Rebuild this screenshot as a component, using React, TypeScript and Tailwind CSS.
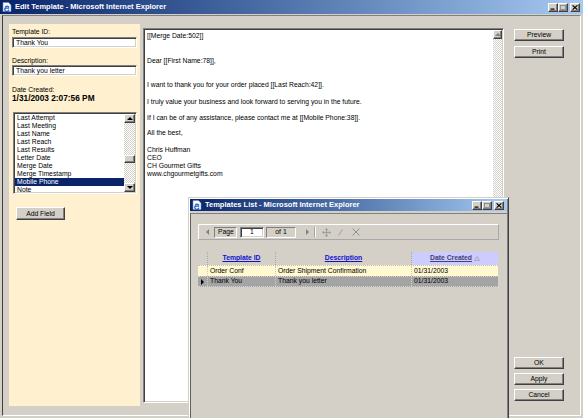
import React from "react";

const F = "font-['Liberation_Sans',Arial,sans-serif]";
const raised =
  "bg-[#d4d0c8] border border-t-white border-l-white border-r-[#404040] border-b-[#404040] shadow-[inset_-1px_-1px_0_#808080]";
const sunken =
  "border border-t-[#808080] border-l-[#808080] border-b-white border-r-white shadow-[inset_1px_1px_0_#404040,inset_-1px_-1px_0_#d4d0c8]";
const checker =
  "bg-[repeating-conic-gradient(#d4d0c8_0_25%,#ffffff_0_50%)] bg-[length:2px_2px]";

function TBtn({ kind }: { kind: "min" | "max" | "close" }) {
  return (
    <div className={`w-[10px] h-[9px] flex items-center justify-center ${raised}`}>
      <svg width="6" height="5" viewBox="0 0 6 5">
        {kind === "min" && <rect x="0.5" y="3.5" width="4" height="1.2" fill="#000" />}
        {kind === "max" && (
          <rect x="0.5" y="0.5" width="5" height="4" fill="none" stroke="#808080" strokeWidth="0.8" />
        )}
        {kind === "close" && (
          <path d="M0.6 0.4 L5.4 4.6 M5.4 0.4 L0.6 4.6" stroke="#000" strokeWidth="1.2" />
        )}
      </svg>
    </div>
  );
}

function IEIcon() {
  return (
    <svg width="10" height="10" viewBox="0 0 10 10">
      <path d="M1 0.5 H6.5 L9 3 V9.5 H1 Z" fill="#fff" stroke="#6b86b8" strokeWidth="0.6" />
      <path
        d="M7.2 6.2 H3.2 A2 2 0 1 0 6.8 7.6 M3.3 5.2 A2 2 0 0 1 6.9 5.3"
        fill="none"
        stroke="#1e5fd0"
        strokeWidth="1.3"
      />
    </svg>
  );
}

function TitleBar({ title, h }: { title: string; h: string }) {
  return (
    <div className={`${h} flex items-center bg-gradient-to-r from-[#0a246a] to-[#a6caf0] pl-[2px] pr-[3px]`}>
      <IEIcon />
      <span className="ml-[3px] text-white font-bold text-[7.5px] leading-none whitespace-nowrap">{title}</span>
      <div className="ml-auto flex items-center">
        <TBtn kind="min" />
        <TBtn kind="max" />
        <div className="ml-[2px]">
          <TBtn kind="close" />
        </div>
      </div>
    </div>
  );
}

function Btn({ label, className = "" }: { label: string; className?: string }) {
  return (
    <div className={`w-[50px] h-[12px] flex items-center justify-center text-[6.8px] leading-none ${raised} ${className}`}>
      {label}
    </div>
  );
}

function Arrow({ dir, color = "#000" }: { dir: "up" | "down" | "left" | "right"; color?: string }) {
  const pts: Record<string, string> = {
    up: "0,3 3,0 6,3",
    down: "0,0 6,0 3,3",
    left: "3,0 3,6 0,3",
    right: "0,0 0,6 3,3",
  };
  const vertical = dir === "up" || dir === "down";
  return (
    <svg width={vertical ? 6 : 3} height={vertical ? 3 : 6} viewBox={vertical ? "0 0 6 3" : "0 0 3 6"}>
      <polygon points={pts[dir]} fill={color} />
    </svg>
  );
}

const fields = [
  "Last Attempt",
  "Last Meeting",
  "Last Name",
  "Last Reach",
  "Last Results",
  "Letter Date",
  "Merge Date",
  "Merge Timestamp",
  "Mobile Phone",
  "Note",
];

function LeftPanel() {
  return (
    <div className="w-[131px] h-[382px] bg-[#fff0d0] pt-[4px] px-[3px] flex flex-col text-[6.8px] leading-[8px]">
      <div className="h-[8px]">Template ID:</div>
      <div className={`mt-[1px] h-[11px] w-[125px] bg-white pl-[3px] flex items-center ${sunken}`}>Thank You</div>
      <div className="mt-[9px] h-[8px]">Description:</div>
      <div className={`h-[11px] w-[125px] bg-white pl-[3px] flex items-center ${sunken}`}>Thank you letter</div>
      <div className="mt-[10px] h-[8px]">Date Created:</div>
      <div className="text-[8.3px] leading-[9px] font-bold">1/31/2003 2:07:56 PM</div>
      <div className={`mt-[9px] ml-[1px] w-[124px] h-[82px] bg-white flex p-[1px] ${sunken}`}>
        <div className="flex-1 flex flex-col">
          {fields.map((f) => (
            <div
              key={f}
              className={`h-[8px] pl-[2px] whitespace-nowrap ${f === "Mobile Phone" ? "bg-[#0a246a] text-white" : ""}`}
            >
              {f}
            </div>
          ))}
        </div>
        <div className="w-[11px] flex flex-col">
          <div className={`h-[9px] flex items-center justify-center ${raised}`}>
            <Arrow dir="up" />
          </div>
          <div className={`h-[32px] ${checker}`} />
          <div className={`h-[8px] ${raised}`} />
          <div className={`flex-1 ${checker}`} />
          <div className={`h-[9px] flex items-center justify-center ${raised}`}>
            <Arrow dir="down" />
          </div>
        </div>
      </div>
      <div className={`mt-[13px] ml-[4px] w-[49px] h-[13px] flex items-center justify-center ${raised}`}>Add Field</div>
    </div>
  );
}

function Editor() {
  return (
    <div className={`ml-[3px] mt-[4px] w-[361px] h-[375px] flex p-[1px] ${sunken}`}>
      <div className="flex-1 bg-white pl-[2px] pt-[2px] text-[6.8px] leading-[8px] whitespace-nowrap">
        <div>[[Merge Date:502]]</div>
        <div className="mt-[17px]">Dear [[First Name:78]],</div>
        <div className="mt-[16px]">I want to thank you for your order placed [[Last Reach:42]].</div>
        <div className="mt-[9px]">I truly value your business and look forward to serving you in the future.</div>
        <div className="mt-[8px]">If I can be of any assistance, please contact me at [[Mobile Phone:38]].</div>
        <div className="mt-[7px]">All the best,</div>
        <div className="mt-[9px]">Chris Huffman</div>
        <div>CEO</div>
        <div>CH Gourmet Gifts</div>
        <div>www.chgourmetgifts.com</div>
      </div>
      <div className={`w-[9px] flex flex-col ${checker}`}>
        <div className={`h-[9px] flex items-center justify-center ${raised}`}>
          <Arrow dir="up" color="#808080" />
        </div>
      </div>
    </div>
  );
}

function MoveIcon() {
  return (
    <svg width="9" height="9" viewBox="0 0 9 9">
      <path d="M4.5 0.5 V8.5 M0.5 4.5 H8.5" stroke="#a0a0a0" strokeWidth="1.2" />
      <path d="M3 2 L4.5 0.3 L6 2 M3 7 L4.5 8.7 L6 7 M2 3 L0.3 4.5 L2 6 M7 3 L8.7 4.5 L7 6" fill="none" stroke="#a0a0a0" strokeWidth="0.9" />
    </svg>
  );
}

function Popup() {
  return (
    <div className="absolute left-[188px] top-[197px] w-[321px] h-[240px] bg-[#d4d0c8] border border-t-[#d4d0c8] border-l-[#d4d0c8] border-r-[#404040] border-b-[#404040] p-[1px] shadow-[inset_1px_1px_0_#fff,inset_-1px_-1px_0_#808080] flex flex-col">
      <TitleBar title="Templates List - Microsoft Internet Explorer" h="h-[12px]" />
      <div className="mt-[2px] flex-1 border-l border-t border-l-[#606060] border-t-[#808080] pl-[7px] pt-[10px] text-[6.8px] leading-none">
        <div className="w-[301px] h-[16px] border border-t-white border-l-white border-b-[#a8a8a8] border-r-[#a8a8a8] flex items-center text-black">
          <div className="ml-[7px]">
            <Arrow dir="left" color="#808080" />
          </div>
          <div className="ml-[5px] w-[23px] h-[11px] border border-t-[#808080] border-l-[#808080] border-b-white border-r-white flex items-center pl-[3px]">
            Page
          </div>
          <div className={`ml-[3px] w-[24px] h-[11px] bg-white flex items-center pl-[9px] ${sunken}`}>1</div>
          <div className="ml-[2px] w-[30px] h-[11px] border border-t-[#808080] border-l-[#808080] border-b-white border-r-white flex items-center justify-center">
            of 1
          </div>
          <div className="ml-[10px]">
            <Arrow dir="right" color="#808080" />
          </div>
          <div className="ml-[5px] w-[2px] h-[10px] border-l border-l-[#a0a0a0] border-r border-r-white" />
          <div className="ml-[6px]">
            <MoveIcon />
          </div>
          <svg className="ml-[7px]" width="5" height="7" viewBox="0 0 5 7">
            <path d="M4.5 0.5 L0.5 6.5" stroke="#a0a0a0" strokeWidth="1" />
          </svg>
          <svg className="ml-[9px]" width="8" height="8" viewBox="0 0 8 8">
            <path d="M0.5 0.5 L7.5 7.5 M7.5 0.5 L0.5 7.5" stroke="#909090" strokeWidth="1" />
          </svg>
        </div>
        <div className="mt-[12px] w-[300px] flex flex-col">
          <div className="h-[13px] flex font-bold">
            <div className="w-[10px] bg-[#d4d0c8] border-r border-dotted border-[#a8a8a8]" />
            <div className="w-[68px] bg-[#d4d0c8] border-r border-dotted border-[#a8a8a8] flex items-center justify-center text-[#1010d0] underline">
              Template ID
            </div>
            <div className="w-[136px] bg-[#d4d0c8] border-r border-dotted border-[#a8a8a8] flex items-center justify-center text-[#1010d0] underline">
              Description
            </div>
            <div className="w-[86px] bg-[#ccccff] flex items-center justify-center text-[#40407a]">
              <span className="underline">Date Created</span>
              <svg className="ml-[2px]" width="6" height="5" viewBox="0 0 6 5">
                <polygon points="0.5,4.5 3,0.5 5.5,4.5" fill="none" stroke="#a0a0b8" strokeWidth="0.8" />
              </svg>
            </div>
          </div>
          <div className="h-[11px] flex bg-[#fff8d0] border-t border-dotted border-[#c0c0c0]">
            <div className="w-[10px] border-r border-dotted border-[#c8c8c8]" />
            <div className="w-[68px] border-r border-dotted border-[#c8c8c8] flex items-center pl-[2px]">Order Conf</div>
            <div className="w-[136px] border-r border-dotted border-[#c8c8c8] flex items-center pl-[2px]">
              Order Shipment Confirmation
            </div>
            <div className="w-[86px] flex items-center pl-[2px]">01/31/2003</div>
          </div>
          <div className="h-[11px] flex bg-[#a4a4a4] border-y border-dotted border-[#d0d0d0]">
            <div className="w-[10px] border-r border-dotted border-[#d0d0d0] flex items-center justify-center">
              <Arrow dir="right" />
            </div>
            <div className="w-[68px] border-r border-dotted border-[#d0d0d0] flex items-center pl-[2px]">Thank You</div>
            <div className="w-[136px] border-r border-dotted border-[#d0d0d0] flex items-center pl-[2px]">
              Thank you letter
            </div>
            <div className="w-[86px] flex items-center pl-[2px]">01/31/2003</div>
          </div>
        </div>
      </div>
    </div>
  );
}

export default function App() {
  return (
    <div className={`relative w-[583px] h-[418px] overflow-hidden bg-[#d4d0c8] ${F} text-black`}>
      <TitleBar title="Edit Template - Microsoft Internet Explorer" h="h-[14px]" />
      <div className="mx-[2px] mt-[1px] h-[401px] border border-l-[#404040] border-t-[#808080] border-r-white border-b-white pl-[6px] pt-[8px] flex items-start">
        <LeftPanel />
        <Editor />
        <div className="ml-[10px] mt-[5px] h-[372px] flex flex-col justify-between">
          <div className="flex flex-col gap-[5px]">
            <Btn label="Preview" />
            <Btn label="Print" />
          </div>
          <div className="flex flex-col gap-[4px]">
            <Btn label="OK" />
            <Btn label="Apply" />
            <Btn label="Cancel" />
          </div>
        </div>
      </div>
      <Popup />
    </div>
  );
}
